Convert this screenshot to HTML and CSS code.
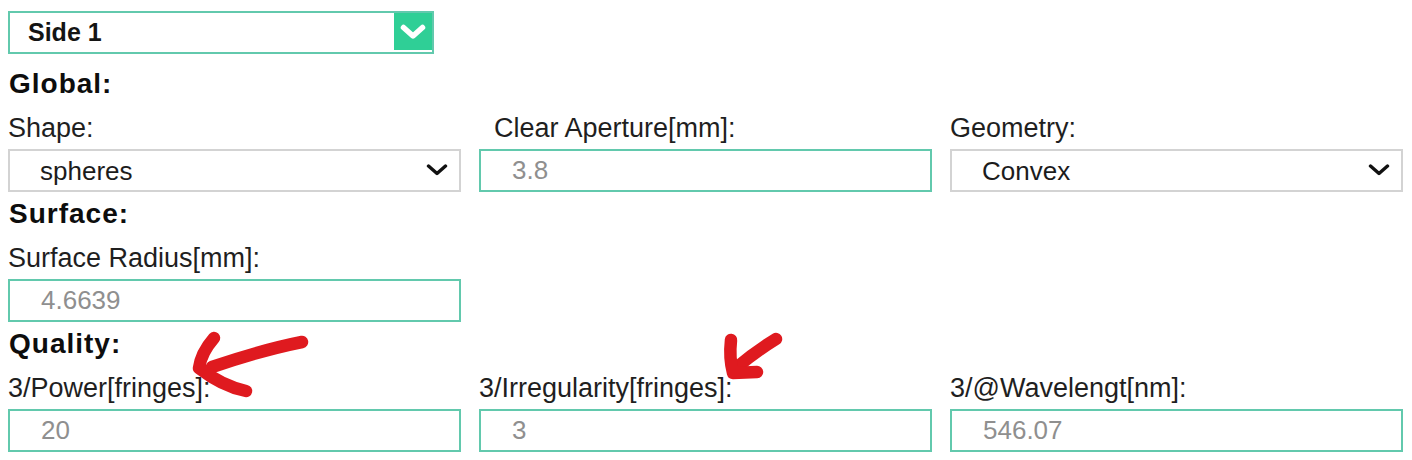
FILE: index.html
```html
<!DOCTYPE html>
<html lang="en">
<head>
    <meta charset="UTF-8">
    <meta name="viewport" content="width=device-width, initial-scale=1.0">
    <title>Surface parameters</title>
    <link rel="stylesheet" href="styles.css">
</head>
<body>
    <div class="page">
        <!-- Side picker -->
        <div class="side-select">
            <span class="side-select-value">Side 1</span>
            <span class="side-select-toggle">
                <svg width="28" height="18" viewBox="0 0 28 18"><path d="M4.5 4.5 L14 13 L23.5 4.5" fill="none" stroke="#fff" stroke-width="5.5" stroke-linecap="round" stroke-linejoin="round"/></svg>
            </span>
        </div>

        <!-- Global -->
        <h2 class="section-title">Global:</h2>
        <div class="field-row">
            <div class="field">
                <label for="shape">Shape:</label>
                <div class="select-wrap">
                    <select id="shape">
                        <option>spheres</option>
                    </select>
                    <svg class="chevron" width="22" height="12" viewBox="0 0 22 12"><path d="M2.5 2 L11 9.5 L19.5 2" fill="none" stroke="#111" stroke-width="3.4" stroke-linecap="round" stroke-linejoin="round"/></svg>
                </div>
            </div>
            <div class="field">
                <label for="aperture" class="label-indent">Clear Aperture[mm]:</label>
                <input type="text" id="aperture" value="3.8">
            </div>
            <div class="field">
                <label for="geometry">Geometry:</label>
                <div class="select-wrap">
                    <select id="geometry">
                        <option>Convex</option>
                    </select>
                    <svg class="chevron" width="22" height="12" viewBox="0 0 22 12"><path d="M2.5 2 L11 9.5 L19.5 2" fill="none" stroke="#111" stroke-width="3.4" stroke-linecap="round" stroke-linejoin="round"/></svg>
                </div>
            </div>
        </div>

        <!-- Surface -->
        <h2 class="section-title">Surface:</h2>
        <div class="field-row">
            <div class="field">
                <label for="radius">Surface Radius[mm]:</label>
                <input type="text" id="radius" value="4.6639">
            </div>
        </div>

        <!-- Quality -->
        <h2 class="section-title">Quality:</h2>
        <div class="field-row">
            <div class="field">
                <label for="power">3/Power[fringes]:</label>
                <input type="text" id="power" value="20">
            </div>
            <div class="field">
                <label for="irregularity">3/Irregularity[fringes]:</label>
                <input type="text" id="irregularity" value="3">
            </div>
            <div class="field">
                <label for="wavelength">3/@Wavelengt[nm]:</label>
                <input type="text" id="wavelength" value="546.07">
            </div>
        </div>

        <!-- Hand-drawn marks on top of the form -->
        <svg class="annotations" width="1412" height="460" viewBox="0 0 1412 460">
            <g fill="none" stroke="#df1a1f" stroke-width="12.5" stroke-linecap="round" stroke-linejoin="round">
                <path d="M302 342 Q262 350 212 367"/>
                <path d="M214 338 Q201 353 199 368 Q222 386 246 391"/>
                <path d="M776 339 Q755 352 736 368"/>
                <path d="M731 340 Q729 358 733 373 L757 372"/>
            </g>
        </svg>
    </div>
</body>
</html>
```

FILE: styles.css
```css
/* Base */
body {
    margin: 0;
    font-family: 'Liberation Sans', Arial, sans-serif;
    background: #fff;
    color: #1c1c1c;
}

.page {
    position: relative;
    padding: 11px 9px 0 8px;
    height: 460px;
    box-sizing: border-box;
    overflow: hidden;
}

/* Side picker */
.side-select {
    display: flex;
    align-items: stretch;
    width: 426px;
    height: 43px;
    box-sizing: border-box;
    border: 2px solid #62c9ad;
}

.side-select-value {
    flex: 1;
    display: flex;
    align-items: center;
    padding-left: 18px;
    font-size: 25px;
    font-weight: bold;
    color: #141414;
}

.side-select-toggle {
    width: 38px;
    margin-bottom: 2px;
    display: flex;
    align-items: center;
    justify-content: center;
    background-color: #2fcf96;
}

/* Section titles */
.section-title {
    margin: 6px 0 13px 1px;
    font-size: 28px;
    line-height: 32px;
    font-weight: bold;
    letter-spacing: 1px;
    color: #0d0d0d;
}

.side-select + .section-title {
    margin-top: 14px;
}

/* Fields */
.field-row {
    display: grid;
    grid-template-columns: repeat(3, 1fr);
    column-gap: 18px;
}

.field {
    display: flex;
    flex-direction: column;
}

label {
    font-size: 27px;
    line-height: 30px;
    margin-bottom: 6px;
    color: #1f1f1f;
}

.label-indent {
    padding-left: 15px;
}

input[type="text"],
select {
    width: 100%;
    height: 43px;
    box-sizing: border-box;
    margin: 0;
    padding: 0 0 0 31px;
    font-family: 'Liberation Sans', Arial, sans-serif;
    font-size: 26px;
    background: #fff;
    border-radius: 0;
    outline: none;
}

input[type="text"] {
    border: 2px solid #62c9ad;
    color: #8f8f8f;
}

select {
    -webkit-appearance: none;
    appearance: none;
    border: 2px solid #d3d3d3;
    color: #1c1c1c;
    padding-left: 30px;
}

.select-wrap {
    position: relative;
}

.chevron {
    position: absolute;
    right: 13px;
    top: 15px;
    pointer-events: none;
}

/* Annotations */
.annotations {
    position: absolute;
    left: 0;
    top: 0;
    pointer-events: none;
}
```
